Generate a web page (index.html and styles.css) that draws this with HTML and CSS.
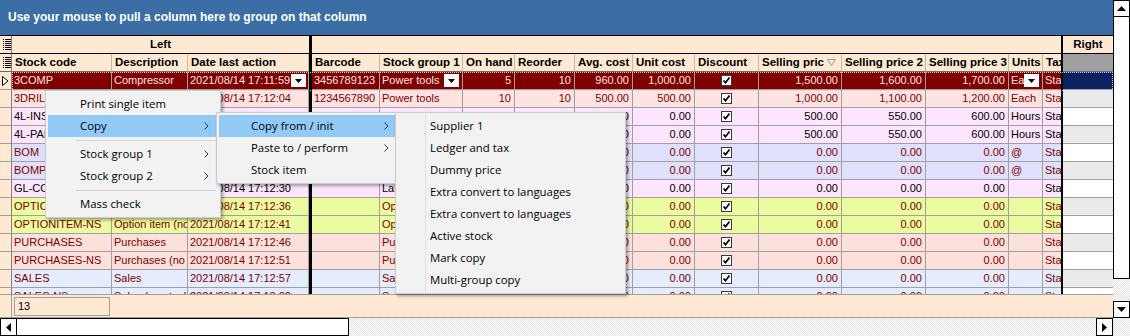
FILE: index.html
```html
<!DOCTYPE html>
<html>
<head>
<meta charset="utf-8">
<title>Stock grid</title>
<link rel="stylesheet" href="styles.css">
</head>
<body>
<div class="app">
  <div class="main">
    <div class="groupbar">Use your mouse to pull a column here to group on that column</div>

    <div class="grid-row bands">
      <div class="c ind"><svg class="chooser" width="8" height="11" viewBox="0 0 8 11"><path d="M0 0h1v1H0zM0 2h1v1H0zM0 4h1v1H0zM0 6h1v1H0zM0 8h1v1H0zM0 10h1v1H0zM2 0h6v1H2zM2 2h6v1H2zM2 4h6v1H2zM2 6h6v1H2zM2 8h6v1H2zM2 10h6v1H2z"/></svg></div>
      <div class="c band band-left">Left</div>
      <div class="sep"></div>
      <div class="c band band-mid"></div>
      <div class="sep"></div>
      <div class="c band band-right">Right</div>
    </div>

    <div class="grid-row head">
      <div class="c ind"><svg class="chooser" width="8" height="11" viewBox="0 0 8 11"><path d="M0 0h1v1H0zM0 2h1v1H0zM0 4h1v1H0zM0 6h1v1H0zM0 8h1v1H0zM0 10h1v1H0zM2 0h6v1H2zM2 2h6v1H2zM2 4h6v1H2zM2 6h6v1H2zM2 8h6v1H2zM2 10h6v1H2z"/></svg></div>
      <div class="c">Stock code</div>
      <div class="c">Description</div>
      <div class="c">Date last action</div>
      <div class="sep"></div>
      <div class="c">Barcode</div>
      <div class="c">Stock group 1</div>
      <div class="c">On hand</div>
      <div class="c">Reorder</div>
      <div class="c">Avg. cost</div>
      <div class="c">Unit cost</div>
      <div class="c">Discount</div>
      <div class="c">Selling pric<svg class="sort" width="9" height="7" viewBox="0 0 9 7"><path d="M0.5 0.5h8l-4 6z"/></svg></div>
      <div class="c">Selling price 2</div>
      <div class="c">Selling price 3</div>
      <div class="c">Units</div>
      <div class="c nbr">Tax</div>
      <div class="sep"></div>
      <div class="c rhead"></div>
    </div>

    <div class="rows">
      <div class="grid-row row sel">
        <div class="c ind"><svg class="cur" width="7" height="10" viewBox="0 0 7 10"><path d="M0.5 0.5l5.5 4.5-5.5 4.5z"/></svg></div>
        <div class="c">3COMP</div>
        <div class="c">Compressor</div>
        <div class="c">2021/08/14 17:11:59<span class="dd"><svg width="7" height="4" viewBox="0 0 7 4"><path d="M0 0h7L3.5 4z"/></svg></span></div>
        <div class="sep"></div>
        <div class="c">3456789123</div>
        <div class="c">Power tools<span class="dd dd3"><svg width="7" height="4" viewBox="0 0 7 4"><path d="M0 0h7L3.5 4z"/></svg></span></div>
        <div class="c n">5</div>
        <div class="c n">10</div>
        <div class="c n">960.00</div>
        <div class="c n">1,000.00</div>
        <div class="c"><span class="cb"><svg width="9" height="9" viewBox="0 0 9 9"><path d="M1.5 4.5l2 2.2 4-5.2"/></svg></span></div>
        <div class="c n">1,500.00</div>
        <div class="c n">1,600.00</div>
        <div class="c n">1,700.00</div>
        <div class="c">Ea<span class="dd dd3"><svg width="7" height="4" viewBox="0 0 7 4"><path d="M0 0h7L3.5 4z"/></svg></span></div>
        <div class="c nbr">Standard</div>
        <div class="sep"></div>
        <div class="c rc"></div>
      </div>

      <div class="grid-row row bg-salmon red">
        <div class="c ind"></div>
        <div class="c">3DRILL</div>
        <div class="c"></div>
        <div class="c">2021/08/14 17:12:04</div>
        <div class="sep"></div>
        <div class="c">1234567890</div>
        <div class="c">Power tools</div>
        <div class="c n">10</div>
        <div class="c n">10</div>
        <div class="c n">500.00</div>
        <div class="c n">500.00</div>
        <div class="c"><span class="cb"><svg width="9" height="9" viewBox="0 0 9 9"><path d="M1.5 4.5l2 2.2 4-5.2"/></svg></span></div>
        <div class="c n">1,000.00</div>
        <div class="c n">1,100.00</div>
        <div class="c n">1,200.00</div>
        <div class="c">Each</div>
        <div class="c nbr">Standard</div>
        <div class="sep"></div>
        <div class="c rc alt"></div>
      </div>

      <div class="grid-row row bg-pink blk">
        <div class="c ind"></div>
        <div class="c">4L-INSTALL</div>
        <div class="c"></div>
        <div class="c"></div>
        <div class="sep"></div>
        <div class="c"></div>
        <div class="c"></div>
        <div class="c n"></div>
        <div class="c n"></div>
        <div class="c n">0.00</div>
        <div class="c n">0.00</div>
        <div class="c"><span class="cb"><svg width="9" height="9" viewBox="0 0 9 9"><path d="M1.5 4.5l2 2.2 4-5.2"/></svg></span></div>
        <div class="c n">500.00</div>
        <div class="c n">550.00</div>
        <div class="c n">600.00</div>
        <div class="c">Hours</div>
        <div class="c nbr">Standard</div>
        <div class="sep"></div>
        <div class="c rc"></div>
      </div>

      <div class="grid-row row bg-pink blk">
        <div class="c ind"></div>
        <div class="c">4L-PAINT</div>
        <div class="c"></div>
        <div class="c"></div>
        <div class="sep"></div>
        <div class="c"></div>
        <div class="c"></div>
        <div class="c n"></div>
        <div class="c n"></div>
        <div class="c n">0.00</div>
        <div class="c n">0.00</div>
        <div class="c"><span class="cb"><svg width="9" height="9" viewBox="0 0 9 9"><path d="M1.5 4.5l2 2.2 4-5.2"/></svg></span></div>
        <div class="c n">500.00</div>
        <div class="c n">550.00</div>
        <div class="c n">600.00</div>
        <div class="c">Hours</div>
        <div class="c nbr">Standard</div>
        <div class="sep"></div>
        <div class="c rc alt"></div>
      </div>

      <div class="grid-row row bg-lav red">
        <div class="c ind"></div>
        <div class="c">BOM</div>
        <div class="c"></div>
        <div class="c"></div>
        <div class="sep"></div>
        <div class="c"></div>
        <div class="c"></div>
        <div class="c n"></div>
        <div class="c n"></div>
        <div class="c n">0.00</div>
        <div class="c n">0.00</div>
        <div class="c"><span class="cb"><svg width="9" height="9" viewBox="0 0 9 9"><path d="M1.5 4.5l2 2.2 4-5.2"/></svg></span></div>
        <div class="c n">0.00</div>
        <div class="c n">0.00</div>
        <div class="c n">0.00</div>
        <div class="c">@</div>
        <div class="c nbr">Standard</div>
        <div class="sep"></div>
        <div class="c rc"></div>
      </div>

      <div class="grid-row row bg-lav red">
        <div class="c ind"></div>
        <div class="c">BOMPRINT</div>
        <div class="c"></div>
        <div class="c"></div>
        <div class="sep"></div>
        <div class="c"></div>
        <div class="c"></div>
        <div class="c n"></div>
        <div class="c n"></div>
        <div class="c n">0.00</div>
        <div class="c n">0.00</div>
        <div class="c"><span class="cb"><svg width="9" height="9" viewBox="0 0 9 9"><path d="M1.5 4.5l2 2.2 4-5.2"/></svg></span></div>
        <div class="c n">0.00</div>
        <div class="c n">0.00</div>
        <div class="c n">0.00</div>
        <div class="c">@</div>
        <div class="c nbr">Standard</div>
        <div class="sep"></div>
        <div class="c rc alt"></div>
      </div>

      <div class="grid-row row bg-pink blk">
        <div class="c ind"></div>
        <div class="c">GL-CODE</div>
        <div class="c"></div>
        <div class="c">2021/08/14 17:12:30</div>
        <div class="sep"></div>
        <div class="c"></div>
        <div class="c">Labour</div>
        <div class="c n"></div>
        <div class="c n"></div>
        <div class="c n">0.00</div>
        <div class="c n">0.00</div>
        <div class="c"><span class="cb"><svg width="9" height="9" viewBox="0 0 9 9"><path d="M1.5 4.5l2 2.2 4-5.2"/></svg></span></div>
        <div class="c n">0.00</div>
        <div class="c n">0.00</div>
        <div class="c n">0.00</div>
        <div class="c"></div>
        <div class="c nbr">Standard</div>
        <div class="sep"></div>
        <div class="c rc"></div>
      </div>

      <div class="grid-row row bg-yel red">
        <div class="c ind"></div>
        <div class="c">OPTION</div>
        <div class="c"></div>
        <div class="c">2021/08/14 17:12:36</div>
        <div class="sep"></div>
        <div class="c"></div>
        <div class="c">Option</div>
        <div class="c n"></div>
        <div class="c n"></div>
        <div class="c n">0.00</div>
        <div class="c n">0.00</div>
        <div class="c"><span class="cb"><svg width="9" height="9" viewBox="0 0 9 9"><path d="M1.5 4.5l2 2.2 4-5.2"/></svg></span></div>
        <div class="c n">0.00</div>
        <div class="c n">0.00</div>
        <div class="c n">0.00</div>
        <div class="c"></div>
        <div class="c nbr">Standard</div>
        <div class="sep"></div>
        <div class="c rc alt"></div>
      </div>

      <div class="grid-row row bg-yel red">
        <div class="c ind"></div>
        <div class="c">OPTIONITEM-NS</div>
        <div class="c">Option item (no stock)</div>
        <div class="c">2021/08/14 17:12:41</div>
        <div class="sep"></div>
        <div class="c"></div>
        <div class="c">Option</div>
        <div class="c n"></div>
        <div class="c n"></div>
        <div class="c n">0.00</div>
        <div class="c n">0.00</div>
        <div class="c"><span class="cb"><svg width="9" height="9" viewBox="0 0 9 9"><path d="M1.5 4.5l2 2.2 4-5.2"/></svg></span></div>
        <div class="c n">0.00</div>
        <div class="c n">0.00</div>
        <div class="c n">0.00</div>
        <div class="c"></div>
        <div class="c nbr">Standard</div>
        <div class="sep"></div>
        <div class="c rc"></div>
      </div>

      <div class="grid-row row bg-pur red">
        <div class="c ind"></div>
        <div class="c">PURCHASES</div>
        <div class="c">Purchases</div>
        <div class="c">2021/08/14 17:12:46</div>
        <div class="sep"></div>
        <div class="c"></div>
        <div class="c">Purchases</div>
        <div class="c n"></div>
        <div class="c n"></div>
        <div class="c n">0.00</div>
        <div class="c n">0.00</div>
        <div class="c"><span class="cb"><svg width="9" height="9" viewBox="0 0 9 9"><path d="M1.5 4.5l2 2.2 4-5.2"/></svg></span></div>
        <div class="c n">0.00</div>
        <div class="c n">0.00</div>
        <div class="c n">0.00</div>
        <div class="c"></div>
        <div class="c nbr">Standard</div>
        <div class="sep"></div>
        <div class="c rc alt"></div>
      </div>

      <div class="grid-row row bg-pur red">
        <div class="c ind"></div>
        <div class="c">PURCHASES-NS</div>
        <div class="c">Purchases (no stock)</div>
        <div class="c">2021/08/14 17:12:51</div>
        <div class="sep"></div>
        <div class="c"></div>
        <div class="c">Purchases</div>
        <div class="c n"></div>
        <div class="c n"></div>
        <div class="c n">0.00</div>
        <div class="c n">0.00</div>
        <div class="c"><span class="cb"><svg width="9" height="9" viewBox="0 0 9 9"><path d="M1.5 4.5l2 2.2 4-5.2"/></svg></span></div>
        <div class="c n">0.00</div>
        <div class="c n">0.00</div>
        <div class="c n">0.00</div>
        <div class="c"></div>
        <div class="c nbr">Standard</div>
        <div class="sep"></div>
        <div class="c rc"></div>
      </div>

      <div class="grid-row row bg-blue red">
        <div class="c ind"></div>
        <div class="c">SALES</div>
        <div class="c">Sales</div>
        <div class="c">2021/08/14 17:12:57</div>
        <div class="sep"></div>
        <div class="c"></div>
        <div class="c">Sales</div>
        <div class="c n"></div>
        <div class="c n"></div>
        <div class="c n">0.00</div>
        <div class="c n">0.00</div>
        <div class="c"><span class="cb"><svg width="9" height="9" viewBox="0 0 9 9"><path d="M1.5 4.5l2 2.2 4-5.2"/></svg></span></div>
        <div class="c n">0.00</div>
        <div class="c n">0.00</div>
        <div class="c n">0.00</div>
        <div class="c"></div>
        <div class="c nbr">Standard</div>
        <div class="sep"></div>
        <div class="c rc alt"></div>
      </div>

      <div class="grid-row row bg-blue red">
        <div class="c ind"></div>
        <div class="c">SALES-NS</div>
        <div class="c">Sales (no stock)</div>
        <div class="c">2021/08/14 17:13:02</div>
        <div class="sep"></div>
        <div class="c"></div>
        <div class="c">Sales</div>
        <div class="c n"></div>
        <div class="c n"></div>
        <div class="c n">0.00</div>
        <div class="c n">0.00</div>
        <div class="c"><span class="cb"><svg width="9" height="9" viewBox="0 0 9 9"><path d="M1.5 4.5l2 2.2 4-5.2"/></svg></span></div>
        <div class="c n">0.00</div>
        <div class="c n">0.00</div>
        <div class="c n">0.00</div>
        <div class="c"></div>
        <div class="c nbr">Standard</div>
        <div class="sep"></div>
        <div class="c rc"></div>
      </div>
    </div>

    <div class="footer">
      <div class="find"></div>
      <div class="count">13</div>
    </div>
  </div>

  <div class="vscroll">
    <div class="sbtn"><svg width="9" height="5" viewBox="0 0 9 5"><path d="M4.5 0L9 5H0z"/></svg></div>
    <div class="vthumb"></div>
    <div class="track"></div>
    <div class="sbtn"><svg width="9" height="5" viewBox="0 0 9 5"><path d="M0 0h9L4.5 5z"/></svg></div>
  </div>
</div>

<div class="hscroll">
  <div class="sbtn hbtn"><svg width="5" height="9" viewBox="0 0 5 9"><path d="M5 0v9L0 4.5z"/></svg></div>
  <div class="hthumb"></div>
  <div class="track"></div>
  <div class="sbtn hbtn"><svg width="5" height="9" viewBox="0 0 5 9"><path d="M0 0l5 4.5L0 9z"/></svg></div>
  <div class="corner track"></div>
</div>

<div class="menu m1">
  <div class="mi">Print single item</div>
  <div class="mi hot">Copy<svg class="chev" width="5" height="8" viewBox="0 0 5 8"><path d="M0.5 0.5l3.5 3.5-3.5 3.5"/></svg></div>
  <div class="msep"></div>
  <div class="mi">Stock group 1<svg class="chev" width="5" height="8" viewBox="0 0 5 8"><path d="M0.5 0.5l3.5 3.5-3.5 3.5"/></svg></div>
  <div class="mi">Stock group 2<svg class="chev" width="5" height="8" viewBox="0 0 5 8"><path d="M0.5 0.5l3.5 3.5-3.5 3.5"/></svg></div>
  <div class="msep"></div>
  <div class="mi">Mass check</div>
</div>

<div class="menu m2">
  <div class="mi hot">Copy from / init<svg class="chev" width="5" height="8" viewBox="0 0 5 8"><path d="M0.5 0.5l3.5 3.5-3.5 3.5"/></svg></div>
  <div class="mi">Paste to / perform<svg class="chev" width="5" height="8" viewBox="0 0 5 8"><path d="M0.5 0.5l3.5 3.5-3.5 3.5"/></svg></div>
  <div class="mi">Stock item</div>
</div>

<div class="menu m3">
  <div class="mi">Supplier 1</div>
  <div class="mi">Ledger and tax</div>
  <div class="mi">Dummy price</div>
  <div class="mi">Extra convert to languages</div>
  <div class="mi">Extra convert to languages</div>
  <div class="mi">Active stock</div>
  <div class="mi">Mark copy</div>
  <div class="mi">Multi-group copy</div>
</div>
</body>
</html>
```

FILE: styles.css
```css
* { box-sizing: border-box; }
html, body { margin: 0; padding: 0; background: #fff; }
body {
  width: 1130px;
  height: 336px;
  overflow: hidden;
  font-family: "Liberation Sans", Arial, sans-serif;
  font-size: 11px;
  color: #000;
}

.app { display: flex; }
.main { width: 1113px; display: flex; flex-direction: column; }

.groupbar {
  height: 36px;
  background: #3b6ea5;
  border-bottom: 1px solid #000;
  color: #fff;
  font-weight: bold;
  font-size: 12px;
  display: flex;
  align-items: center;
  padding-left: 8px;
  padding-bottom: 1px;
}

.grid-row {
  display: grid;
  grid-template-columns: 12px 100px 76px 121px 3px 68px 83px 52px 60px 58px 62px 64px 83px 84px 83px 34px 18px 2px 50px;
  height: 18px;
}

.c {
  border-right: 1px solid #a0a0a0;
  border-bottom: 1px solid #a0a0a0;
  padding: 0 2px;
  line-height: 17px;
  white-space: nowrap;
  overflow: hidden;
  position: relative;
}
.n { text-align: right; padding-right: 3px; }
.nbr { border-right: none; }
.sep { background: #000; }

.ind {
  background: #ffe9d3;
  border-right-color: #808080;
  padding: 0;
}

/* band row */
.bands { background: #ffe9d3; }
.bands .c { border-bottom-color: #000; }
.band { font-weight: bold; font-size: 11.5px; text-align: center; }
.band-left { grid-column: 2 / 5; border-right: none; }
.band-mid { grid-column: 6 / 18; border-right: none; }
.band-right { grid-column: 19; border-right: none; }
.chooser { display: block; margin: 3px 0 0 3px; fill: #000; }

/* header row */
.head { background: #ffe9d3; font-weight: bold; font-size: 11.5px; }
.head .c { border-right-color: #c4b8ac; border-bottom-color: #6a6a6a; padding-left: 3px; }
.head .ind { border-right-color: #808080; padding: 0; }
.head .rhead { background: #a0a0a0; border-right: none; }
.sort { position: absolute; right: 5px; top: 5px; fill: none; stroke: #9a9a9a; stroke-width: 1; }

/* data rows */
.rows { height: 222px; overflow: hidden; }
.red { color: #800000; }
.blk { color: #000; }
.bg-salmon { background: #fde4e2; }
.bg-pink { background: #fde6fd; }
.bg-lav { background: #e0e0fc; }
.bg-yel { background: #ebfba0; }
.bg-pur { background: #fce0dc; }
.bg-blue { background: #e4ecfd; }
.rc { background: #fff; border-right: none; }
.rc.alt { background: #ebebeb; }

.sel { background: #800000; color: #fde2e2; position: relative; }
.sel .rc { background: #0b2262; }
.sel::after {
  content: "";
  position: absolute;
  left: 12px;
  right: 0;
  top: 0;
  height: 17px;
  border: 1px dotted #e9c9c9;
  pointer-events: none;
}
.cur { display: block; margin: 4px 0 0 2px; fill: #fff; stroke: #000; stroke-width: 1; }

.dd {
  position: absolute;
  right: 2px;
  top: 2px;
  width: 15px;
  height: 13px;
  background: #fff;
  display: flex;
  align-items: center;
  justify-content: center;
}
.dd3 { right: 3px; }
.dd svg { display: block; fill: #000; }

.cb {
  display: block;
  width: 11px;
  height: 11px;
  margin: 3px auto 0;
  background: #fff;
  border: 1px solid #3a3a3a;
}
.cb svg { display: block; fill: none; stroke: #000; stroke-width: 1.8; }

/* footer */
.footer {
  height: 24px;
  background: #ffe9d3;
  border-top: 1px solid #a0a0a0;
  border-bottom: 1px solid #a0a0a0;
  display: flex;
}
.find { width: 12px; border-right: 1px solid #a0a0a0; }
.count {
  margin: 2px 0 0 2px;
  width: 96px;
  height: 19px;
  border: 1px solid #a0a0a0;
  padding-left: 3px;
  line-height: 17px;
}

/* scrollbars */
.track {
  background-color: #fff;
  background-image: repeating-conic-gradient(#e2e2e2 0 25%, #fff 0 50%);
  background-size: 2px 2px;
}
.sbtn {
  background: #fff;
  border: 1px solid #000;
  display: flex;
  align-items: center;
  justify-content: center;
}
.sbtn svg { display: block; fill: #000; }

.vscroll { width: 17px; height: 318px; display: flex; flex-direction: column; }
.vscroll .sbtn { height: 17px; }
.vthumb { height: 262px; background: #fff; border: 1px solid #000; border-top: none; }
.vscroll .track { flex: 1; }

.hscroll { display: flex; height: 18px; }
.hbtn { width: 17px; }
.hthumb { width: 332px; background: #fff; border: 1px solid #000; border-left: none; }
.hscroll .track { flex: 1; }
.hscroll .corner { flex: none; width: 17px; }

/* context menus */
.menu {
  position: absolute;
  background: #f2f2f2;
  border: 1px solid #cccccc;
  padding: 2px;
  font-family: "Open Sans", "Noto Sans", sans-serif;
  font-size: 11.4px;
  color: #000;
  box-shadow: 2px 2px 3px rgba(0, 0, 0, 0.35);
}
.m1 { left: 45px; top: 90px; width: 176px; z-index: 1; }
.m2 { left: 216px; top: 112px; width: 185px; z-index: 2; }
.m3 {
  left: 395px; top: 112px; width: 231px; z-index: 3;
  background-image: linear-gradient(to right, transparent 29px, #e2e2e2 29px, #e2e2e2 30px, transparent 30px);
}
.mi {
  height: 22px;
  line-height: 22px;
  padding-left: 32px;
  position: relative;
  white-space: nowrap;
}
.mi.hot { background: #91c9f7; }
.chev {
  position: absolute;
  right: 9px;
  top: 7px;
  fill: none;
  stroke: #333;
  stroke-width: 1;
}
.msep { height: 6px; position: relative; }
.msep::after {
  content: "";
  position: absolute;
  left: 28px;
  right: 2px;
  top: 3px;
  height: 1px;
  background: #d2d2d2;
}
```
